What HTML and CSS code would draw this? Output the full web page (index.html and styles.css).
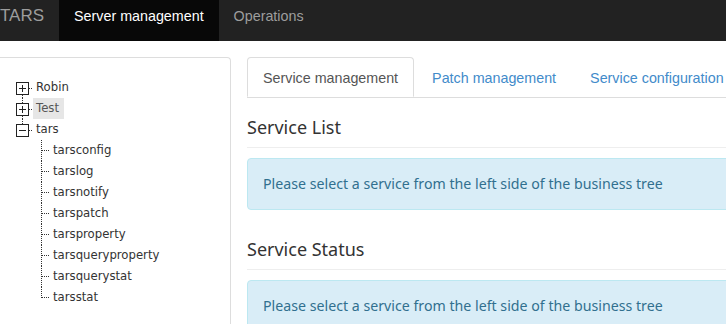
FILE: index.html
```html
<!DOCTYPE html>
<html>
<head>
<meta charset="utf-8">
<link rel="stylesheet" href="styles.css">
</head>
<body>
<nav class="navbar">
  <span class="brand">TARS</span>
  <a class="nav-item active">Server management</a>
  <a class="nav-item">Operations</a>
</nav>
<div class="main">
  <aside class="side-panel">
    <ul class="tree">
      <li class="row root">
        <svg class="sw" width="20" height="21" viewBox="0 0 20 21"><rect x="3.5" y="5.5" width="12" height="12" fill="#fff" stroke="#222"/><path d="M6 11.5h7M9.5 8v7" stroke="#222"/><path d="M16 11.5h4M9.5 18v3" stroke="#333" stroke-dasharray="1 1"/></svg>
        <span class="lbl">Robin</span>
      </li>
      <li class="row root">
        <svg class="sw" width="20" height="21" viewBox="0 0 20 21"><rect x="3.5" y="5.5" width="12" height="12" fill="#fff" stroke="#222"/><path d="M6 11.5h7M9.5 8v7" stroke="#222"/><path d="M16 11.5h4M9.5 0v5M9.5 18v3" stroke="#333" stroke-dasharray="1 1"/></svg>
        <span class="lbl sel">Test</span>
      </li>
      <li class="row root">
        <svg class="sw" width="20" height="21" viewBox="0 0 20 21"><rect x="3.5" y="5.5" width="12" height="12" fill="#fff" stroke="#222"/><path d="M6 11.5h7" stroke="#222"/><path d="M16 11.5h4M9.5 0v5" stroke="#333" stroke-dasharray="1 1"/></svg>
        <span class="lbl">tars</span>
      </li>
      <li class="row child">
        <svg class="sw" width="18" height="21" viewBox="0 0 18 21"><path d="M9.5 0v21M10 10.5h8" stroke="#333" stroke-dasharray="1 1"/></svg>
        <span class="lbl">tarsconfig</span>
      </li>
      <li class="row child">
        <svg class="sw" width="18" height="21" viewBox="0 0 18 21"><path d="M9.5 0v21M10 10.5h8" stroke="#333" stroke-dasharray="1 1"/></svg>
        <span class="lbl">tarslog</span>
      </li>
      <li class="row child">
        <svg class="sw" width="18" height="21" viewBox="0 0 18 21"><path d="M9.5 0v21M10 10.5h8" stroke="#333" stroke-dasharray="1 1"/></svg>
        <span class="lbl">tarsnotify</span>
      </li>
      <li class="row child">
        <svg class="sw" width="18" height="21" viewBox="0 0 18 21"><path d="M9.5 0v21M10 10.5h8" stroke="#333" stroke-dasharray="1 1"/></svg>
        <span class="lbl">tarspatch</span>
      </li>
      <li class="row child">
        <svg class="sw" width="18" height="21" viewBox="0 0 18 21"><path d="M9.5 0v21M10 10.5h8" stroke="#333" stroke-dasharray="1 1"/></svg>
        <span class="lbl">tarsproperty</span>
      </li>
      <li class="row child">
        <svg class="sw" width="18" height="21" viewBox="0 0 18 21"><path d="M9.5 0v21M10 10.5h8" stroke="#333" stroke-dasharray="1 1"/></svg>
        <span class="lbl">tarsqueryproperty</span>
      </li>
      <li class="row child">
        <svg class="sw" width="18" height="21" viewBox="0 0 18 21"><path d="M9.5 0v21M10 10.5h8" stroke="#333" stroke-dasharray="1 1"/></svg>
        <span class="lbl">tarsquerystat</span>
      </li>
      <li class="row child">
        <svg class="sw" width="18" height="21" viewBox="0 0 18 21"><path d="M9.5 0v11M10 10.5h8" stroke="#333" stroke-dasharray="1 1"/></svg>
        <span class="lbl">tarsstat</span>
      </li>
    </ul>
  </aside>
  <section class="content">
    <ul class="tabs">
      <li class="tab active">Service management</li>
      <li class="tab">Patch management</li>
      <li class="tab">Service configuration</li>
    </ul>
    <h3 class="sec-title first">Service List</h3>
    <div class="alert">Please select a service from the left side of the business tree</div>
    <h3 class="sec-title">Service Status</h3>
    <div class="alert">Please select a service from the left side of the business tree</div>
  </section>
</div>
</body>
</html>
```
FILE: styles.css
```css
html, body {
  margin: 0;
  padding: 0;
}
body {
  width: 726px;
  height: 324px;
  overflow: hidden;
  background: #fff;
  font-family: "Liberation Sans", Arial, sans-serif;
  font-size: 14.3px;
  color: #333;
}
.navbar {
  display: flex;
  height: 41px;
  background: #222;
}
.brand {
  font-size: 17px;
  line-height: 20px;
  padding: 6px 15px 0 0;
  color: #9d9d9d;
}
.nav-item {
  display: block;
  padding: 6px 15px 0;
  line-height: 20px;
  color: #9d9d9d;
}
.nav-item.active {
  background: #080808;
  color: #fff;
}
.main {
  display: flex;
  gap: 16px;
  padding-top: 16px;
}
.side-panel {
  flex: none;
  width: 230px;
  height: 300px;
  border-top: 1px solid #ddd;
  border-right: 1px solid #ddd;
  border-top-right-radius: 4px;
  background: #fff;
}
.tree {
  list-style: none;
  margin: 0;
  padding: 19px 0 0;
}
.row {
  display: flex;
  align-items: center;
  height: 21px;
}
.row.root {
  padding-left: 13px;
}
.row.child {
  padding-left: 32px;
}
.sw {
  display: block;
  flex: none;
}
.lbl {
  display: block;
  padding: 0 3px;
  height: 21px;
  line-height: 21px;
  font-family: "DejaVu Sans", Verdana, sans-serif;
  font-size: 11.7px;
  color: #333;
}
.lbl.sel {
  background: #e6e6e6;
  color: #555;
  padding-right: 5px;
}
.content {
  flex: none;
  width: 560px;
}
.tabs {
  display: flex;
  list-style: none;
  margin: 0;
  padding: 0;
  height: 40px;
  border-bottom: 1px solid #ddd;
}
.tab {
  margin-right: 2px;
  padding: 10px 15px;
  line-height: 20px;
  border: 1px solid transparent;
  border-radius: 4px 4px 0 0;
  color: #428bca;
}
.tab.active {
  border-color: #ddd #ddd transparent;
  background: #fff;
  color: #555;
}
.sec-title {
  margin: 28px 0 0;
  padding-bottom: 9px;
  border-bottom: 1px solid #eee;
  font-family: "Noto Sans", "Open Sans", sans-serif;
  font-weight: normal;
  font-size: 18px;
  line-height: 22px;
  color: #333;
}
.sec-title.first {
  margin-top: 18px;
}
.alert {
  margin-top: 10px;
  padding: 15px;
  line-height: 20px;
  background: #d9edf7;
  border: 1px solid #bce8f1;
  border-radius: 4px;
  color: #31708f;
  font-family: "Noto Sans", "Open Sans", sans-serif;
  font-size: 14.2px;
}
```
